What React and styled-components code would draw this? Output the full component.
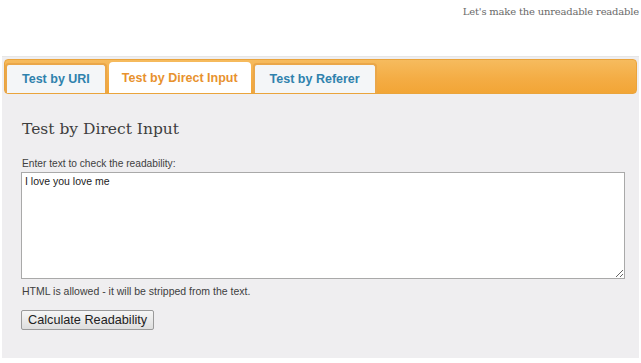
import React, { useState } from 'react'
import styled, { createGlobalStyle } from 'styled-components'

const GlobalStyle = createGlobalStyle`
  html, body {
    margin: 0;
    padding: 0;
    background: #ffffff;
  }
  body {
    font-family: "Liberation Sans", Arial, sans-serif;
  }
`

const tabs = [
  { id: 'uri', label: 'Test by URI' },
  { id: 'direct', label: 'Test by Direct Input' },
  { id: 'referer', label: 'Test by Referer' },
]

const App = () => {
  const [active, setActive] = useState('direct')
  const [text, setText] = useState('I love you love me')

  return (
    <>
      <GlobalStyle />
      <Page>
        <Tagline>Let's make the unreadable readable</Tagline>
        <Panel>
          <TabBar>
            {tabs.map((t) => (
              <Tab key={t.id} $active={active === t.id} onClick={() => setActive(t.id)}>
                {t.label}
              </Tab>
            ))}
          </TabBar>
          <Content>
            <Heading>Test by Direct Input</Heading>
            <Label htmlFor="input">Enter text to check the readability:</Label>
            <TextArea id="input" value={text} onChange={(e) => setText(e.target.value)} />
            <Hint>HTML is allowed - it will be stripped from the text.</Hint>
            <Button type="button">Calculate Readability</Button>
          </Content>
        </Panel>
      </Page>
    </>
  )
}

const Page = styled.div`
padding:0 2px;
`

const Tagline = styled.div`
height:56px;
box-sizing:border-box;
padding-top:6px;
text-align:right;
font-family:"DejaVu Serif", "Liberation Serif", serif;
font-size:10px;
letter-spacing:-0.2px;
color:#6a6a6a;
`

const Panel = styled.div`
background-color:#efeef0;
padding:2px 2px 28px 2px;
border-top:1px solid #e6e6e6;
`

const TabBar = styled.div`
display:flex;
align-items:flex-end;
gap:2px;
height:35px;
box-sizing:border-box;
padding:0;
border-radius:4px;
border:1px solid #eaa43c;
background:linear-gradient(to bottom, #f6bb5e 0%, #f4ad45 55%, #f2a536 100%);
`

const Tab = styled.div`
display:flex;
align-items:center;
box-sizing:border-box;
padding:0 ${(p) => (p.$active ? '13px' : '15px')};
font-size:12.5px;
font-weight:700;
cursor:pointer;
border-radius:4px 4px 0 0;
color:${(p) => (p.$active ? '#e8922e' : '#2f82ad')};
background-color:${(p) => (p.$active ? '#ffffff' : '#f4f6f8')};
border:${(p) => (p.$active ? 'none' : '2px solid #eaa74a')};
border-bottom:none;
height:${(p) => (p.$active ? '31px' : '30px')};
`

const Content = styled.div`
padding:26px 0 0 17px;
`

const Heading = styled.h2`
margin:0 0 19px 1px;
font-family:"DejaVu Serif", "Liberation Serif", serif;
font-weight:400;
font-size:15.5px;
line-height:18px;
color:#3e3e3e;
`

const Label = styled.label`
display:block;
margin:0 0 2px 1px;
font-size:10.2px;
line-height:13px;
color:#404040;
`

const TextArea = styled.textarea`
display:block;
width:604px;
height:107px;
box-sizing:border-box;
margin:0;
padding:2px 3px;
border:1px solid #a9a9a9;
font-family:"Liberation Sans", Arial, sans-serif;
font-size:10.5px;
color:#222;
background:#ffffff;
`

const Hint = styled.p`
margin:6px 0 12px 1px;
font-size:10.5px;
line-height:13px;
color:#404040;
`

const Button = styled.button`
display:block;
height:20px;
padding:0 6px;
font-family:"Liberation Sans", Arial, sans-serif;
font-size:12.7px;
color:#222;
border:1px solid #9a9a9a;
border-radius:2px;
background:linear-gradient(to bottom, #f6f6f6, #dedede);
`

export default App
